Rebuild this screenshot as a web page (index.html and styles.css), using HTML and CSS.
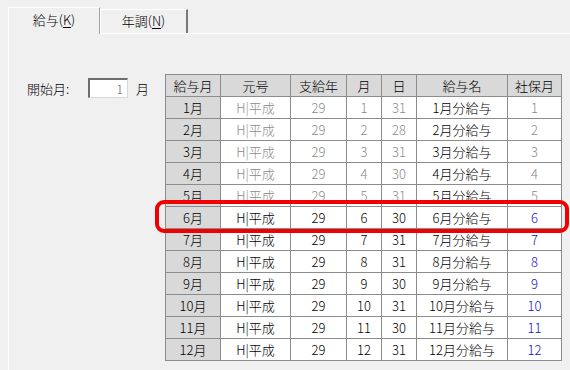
FILE: index.html
```html
<!DOCTYPE html>
<html lang="ja">
<head>
    <meta charset="UTF-8">
    <title>給与設定</title>
    <link rel="stylesheet" href="styles.css">
</head>
<body>
    <div class="tabs">
        <div class="tab active">給与(<u>K</u>)</div>
        <div class="tab">年調(<u>N</u>)</div>
    </div>

    <div class="panel">
        <div class="start">
            <span class="start-label">開始月:</span>
            <span class="start-input">1</span>
            <span class="start-unit">月</span>
        </div>

        <div class="grid-wrap">
            <table class="grid">
                <thead>
                    <tr>
                        <th class="c-month">給与月</th>
                        <th class="c-era">元号</th>
                        <th class="c-year">支給年</th>
                        <th class="c-m">月</th>
                        <th class="c-d">日</th>
                        <th class="c-name">給与名</th>
                        <th class="c-ins">社保月</th>
                    </tr>
                </thead>
                <tbody id="rows"></tbody>
            </table>
            <div class="highlight"></div>
        </div>
    </div>

    <script>
        const rows = document.getElementById('rows');
        const days = [31, 28, 31, 30, 31, 30, 31, 31, 30, 31, 30, 31];
        const startMonth = 6;

        days.forEach((d, i) => {
            const m = i + 1;
            const tr = document.createElement('tr');
            if (m < startMonth) tr.className = 'past';
            tr.innerHTML =
                `<td class="head">${m}月</td>` +
                `<td class="dim">H|平成</td>` +
                `<td class="dim">29</td>` +
                `<td class="dim">${m}</td>` +
                `<td class="dim">${d}</td>` +
                `<td>${m}月分給与</td>` +
                `<td class="ins">${m}</td>`;
            rows.appendChild(tr);
        });
    </script>
</body>
</html>
```

FILE: styles.css
```css
body {
    margin: 0;
    background-color: #f0f0f0;
    font-family: "Noto Sans CJK JP", "Liberation Sans", sans-serif;
    font-weight: 300;
    font-size: 12px;
    color: #000;
    width: 570px;
    height: 370px;
    overflow: hidden;
}

.tabs {
    display: flex;
    align-items: flex-end;
    padding: 7px 0 0 8px;
    height: 26px;
}

.tab {
    box-sizing: border-box;
    text-align: center;
    font-size: 13px;
    line-height: 20px;
    background-color: #f0f0f0;
    border-top: 1px solid #ffffff;
    border-left: 1px solid #ffffff;
    border-right: 2px solid #7a7a7a;
}

.tab.active {
    width: 92px;
    height: 27px;
    padding-top: 2px;
    margin-bottom: -1px;
    position: relative;
    z-index: 1;
    border-right-color: #a0a0a0;
    border-right-width: 1px;
}

.tab:not(.active) {
    width: 88px;
    height: 24px;
    padding-top: 1px;
}

.tab u {
    text-underline-offset: 2px;
}

.panel {
    margin-left: 8px;
    height: 337px;
    border-top: 1px solid #ffffff;
    border-left: 1px solid #ffffff;
    display: flex;
    align-items: flex-start;
}

.start {
    display: flex;
    align-items: center;
    margin: 44px 0 0 18px;
    width: 138px;
}

.start-label {
    font-size: 13px;
    width: 61px;
}

.start-input {
    box-sizing: border-box;
    width: 40px;
    height: 20px;
    line-height: 17px;
    text-align: right;
    padding-right: 4px;
    background-color: #fff;
    border-top: 2px solid #6e6e6e;
    border-left: 2px solid #6e6e6e;
    border-right: 1px solid #d8d8d8;
    border-bottom: 1px solid #d8d8d8;
    color: #555;
}

.start-unit {
    font-size: 13px;
    margin-left: 8px;
}

.grid-wrap {
    position: relative;
    margin-top: 40px;
}

.grid {
    border-collapse: collapse;
    border: 1px solid #7c7c7c;
    background-color: #fff;
}

.grid th,
.grid td {
    border: 1px solid #8c8c8c;
    height: 21px;
    padding: 0;
    text-align: center;
    font-size: 13px;
    line-height: 20px;
    font-weight: 300;
}

.grid th {
    background-color: #d9d9d9;
}

.grid td.head {
    background-color: #d9d9d9;
}

.c-month { width: 54px; }
.c-era { width: 69px; }
.c-year { width: 55px; }
.c-m { width: 34px; }
.c-d { width: 34px; }
.c-name { width: 90px; }
.c-ins { width: 53px; }

.grid td.ins {
    color: #1010c8;
}

.grid tr.past td.dim,
.grid tr.past td.ins {
    color: #8a8a8a;
}

.highlight {
    position: absolute;
    left: -10px;
    right: -7px;
    top: 126px;
    height: 25px;
    border: 4px solid #f00000;
    border-radius: 9px;
    pointer-events: none;
}
```
